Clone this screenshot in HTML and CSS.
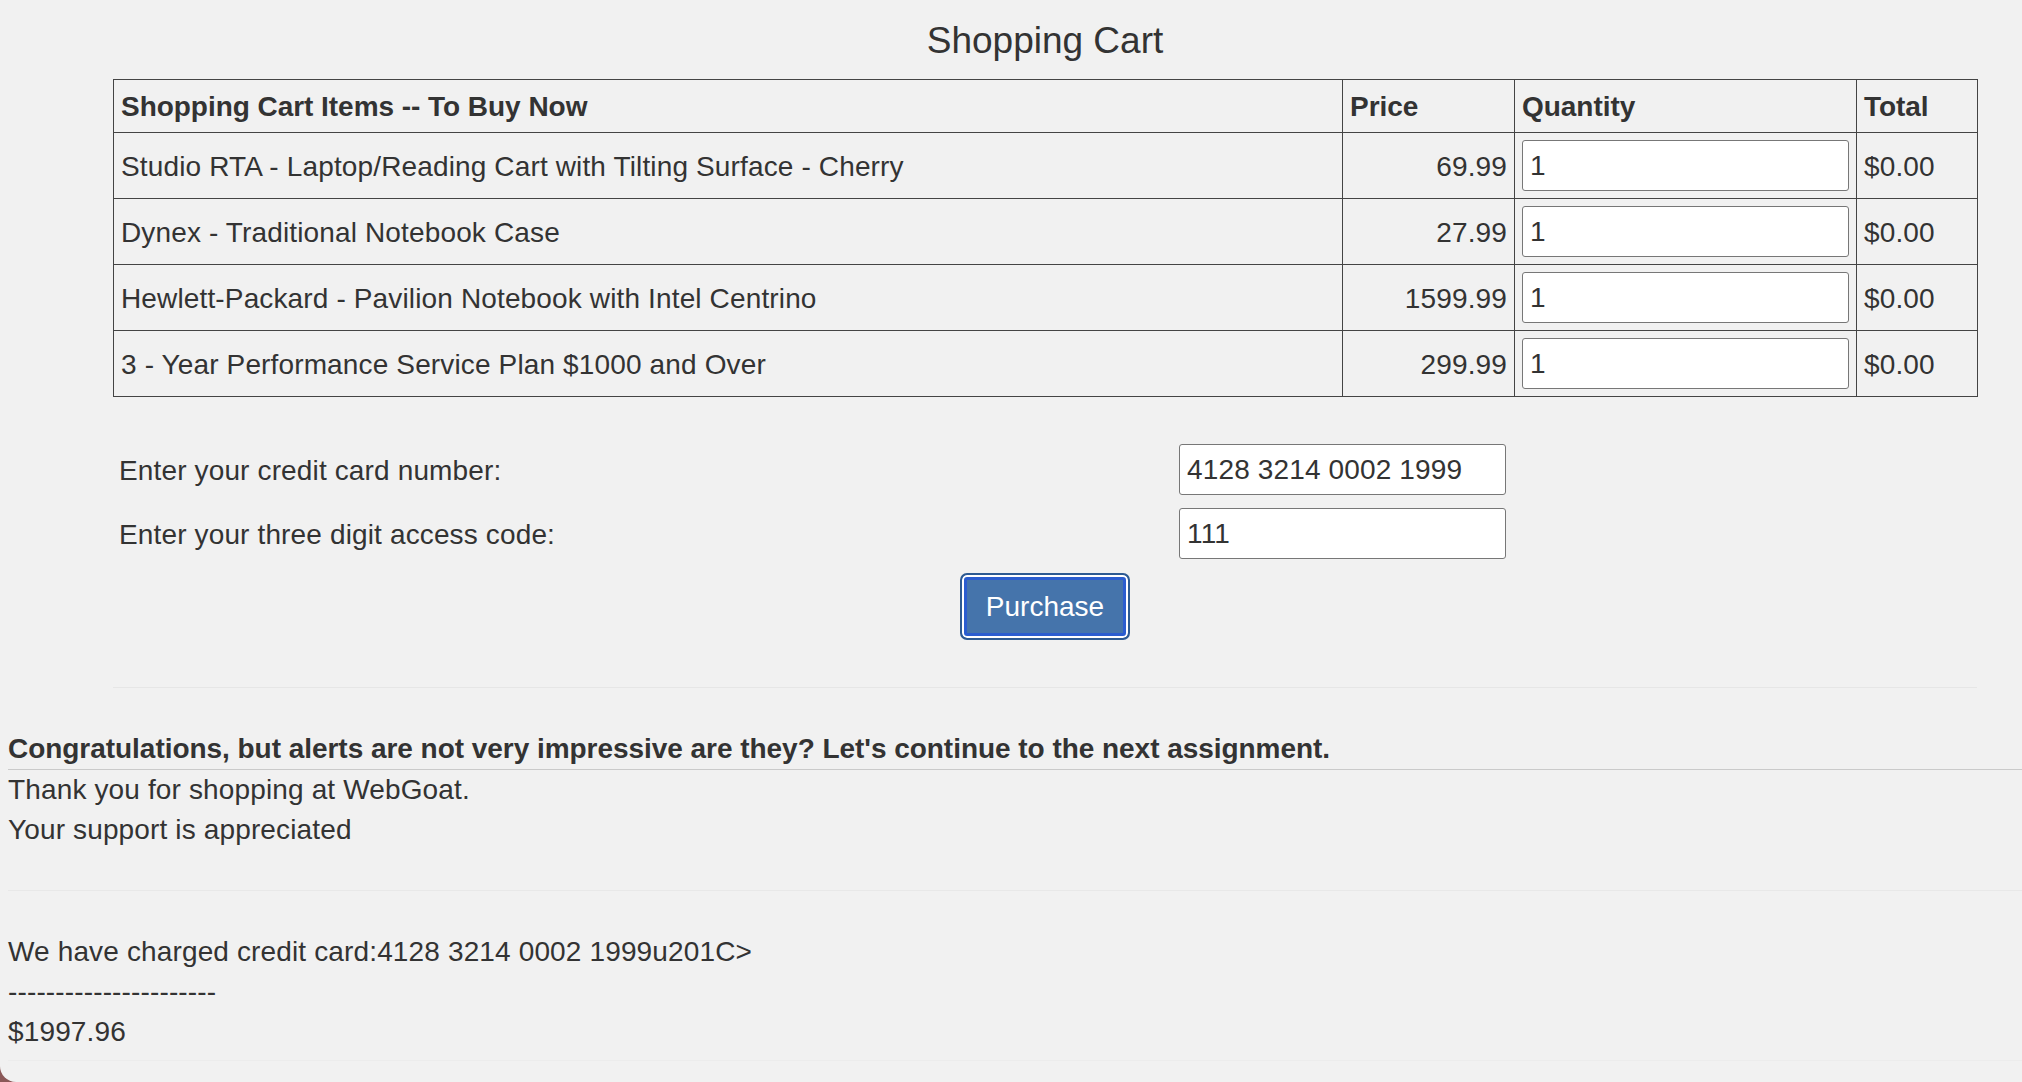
FILE: index.html
```html
<!DOCTYPE html>
<html lang="en">
<head>
<meta charset="utf-8">
<title>Shopping Cart</title>
<link rel="stylesheet" href="styles.css">
</head>
<body>
<div class="page">
  <div class="lesson">
    <h2 class="title">Shopping Cart</h2>
    <table class="cart">
      <colgroup>
        <col class="c-item"><col class="c-price"><col class="c-qty"><col class="c-total">
      </colgroup>
      <thead>
        <tr><th>Shopping Cart Items -- To Buy Now</th><th>Price</th><th>Quantity</th><th>Total</th></tr>
      </thead>
      <tbody>
        <tr><td>Studio RTA - Laptop/Reading Cart with Tilting Surface - Cherry</td><td class="num">69.99</td><td class="qty"><input class="field" value="1"></td><td>$0.00</td></tr>
        <tr><td>Dynex - Traditional Notebook Case</td><td class="num">27.99</td><td class="qty"><input class="field" value="1"></td><td>$0.00</td></tr>
        <tr><td>Hewlett-Packard - Pavilion Notebook with Intel Centrino</td><td class="num">1599.99</td><td class="qty"><input class="field" value="1"></td><td>$0.00</td></tr>
        <tr><td>3 - Year Performance Service Plan $1000 and Over</td><td class="num">299.99</td><td class="qty"><input class="field" value="1"></td><td>$0.00</td></tr>
      </tbody>
    </table>
    <div class="pay">
      <label class="pay-label">Enter your credit card number:</label>
      <input class="field" value="4128 3214 0002 1999">
      <label class="pay-label">Enter your three digit access code:</label>
      <input class="field" value="111">
    </div>
    <div class="actions"><button class="btn" type="button">Purchase</button></div>
    <hr class="sep">
  </div>
  <div class="feedback">Congratulations, but alerts are not very impressive are they? Let's continue to the next assignment.</div>
  <div class="output">Thank you for shopping at WebGoat.<br>Your support is appreciated</div>
  <hr class="faint gap">
  <div class="output later">We have charged credit card:4128 3214 0002 1999u201C&gt;<br>----------------------<br>$1997.96</div>
  <hr class="faint end">
</div>
</body>
</html>
```
FILE: styles.css
```css
html {
  background: #8a5858;
}
body {
  margin: 0;
  font-family: "Liberation Sans", Arial, Helvetica, sans-serif;
  font-size: 28px;
  line-height: 40px;
  letter-spacing: 0.14px;
  color: #333;
}
.page {
  box-sizing: border-box;
  min-height: 1082px;
  padding: 19px 0 0 8px;
  background: #f1f1f1;
  border-bottom-left-radius: 16px;
  overflow: hidden;
}
.lesson {
  margin-left: 105px;
  width: 1864px;
}
.title {
  margin: 0 0 16px;
  font-size: 37px;
  line-height: 44px;
  font-weight: normal;
  letter-spacing: 0;
  text-align: center;
  color: #333;
}
.cart {
  width: 1864px;
  table-layout: fixed;
  border-collapse: collapse;
  border: 1px solid #444;
}
.c-item { width: 1229px; }
.c-price { width: 172px; }
.c-qty { width: 342px; }
.c-total { width: 121px; }
.cart th,
.cart td {
  border: 1px solid #444;
  text-align: left;
  vertical-align: middle;
  white-space: nowrap;
}
.cart th {
  padding: 7px 7px 5px;
  font-weight: bold;
  letter-spacing: -0.04px;
}
.cart td {
  padding: 8px 7px 6px;
}
.cart td.qty {
  padding: 7px 7px;
}
.cart td.num {
  text-align: right;
}
.cart td.qty .field {
  display: block;
  width: 100%;
}
.field {
  box-sizing: border-box;
  height: 51px;
  margin: 0;
  padding: 0 7px;
  border: 1px solid #777;
  border-radius: 3px;
  background: #fff;
  font-family: "Liberation Sans", Arial, Helvetica, sans-serif;
  font-size: 28px;
  letter-spacing: 0.14px;
  color: #333;
}
.pay {
  display: grid;
  grid-template-columns: 1060px 327px;
  grid-auto-rows: 51px;
  row-gap: 13px;
  align-items: center;
  margin-top: 47px;
  padding-left: 6px;
}
.pay-label {
  padding-top: 2px;
}
.pay .field {
  width: 327px;
}
.actions {
  margin-top: 14px;
  text-align: center;
  line-height: 0;
}
.btn {
  box-sizing: border-box;
  width: 170px;
  height: 67px;
  padding: 0;
  border: 2px solid #2d5a92;
  border-radius: 7px;
  background: #4574ab;
  box-shadow: inset 0 0 0 2px #fff, inset 0 0 0 5px #2b5dcf;
  color: #fff;
  font-family: "Liberation Sans", Arial, Helvetica, sans-serif;
  font-size: 28px;
  line-height: 40px;
}
.sep {
  margin: 47px 0 0;
  border: 0;
  border-top: 1px solid #e6e6e6;
  height: 0;
}
.feedback {
  margin-top: 41px;
  font-weight: bold;
  letter-spacing: -0.04px;
  border-bottom: 1px solid #cacaca;
}
.faint {
  margin: 0;
  border: 0;
  border-top: 1px solid #e8e8e8;
  height: 0;
}
.faint.gap {
  margin-top: 40px;
}
.output.later {
  margin-top: 41px;
}
.faint.end {
  margin-top: 8px;
  border-top-color: #ececec;
}
```
